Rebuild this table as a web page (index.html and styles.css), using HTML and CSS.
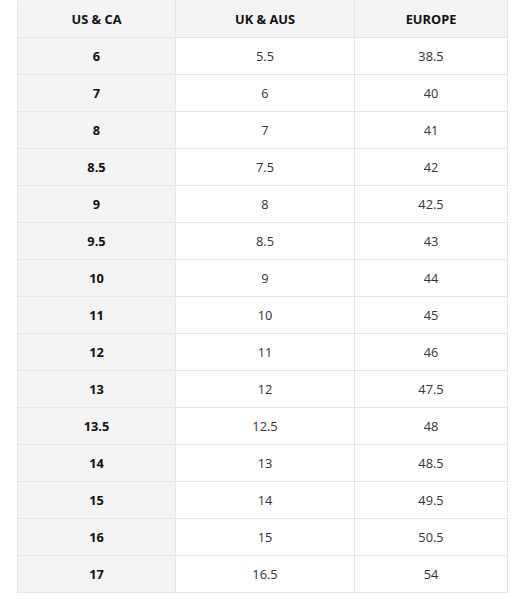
FILE: index.html
```html
<!DOCTYPE html>
<html>
<head>
<meta charset="utf-8">
<link rel="stylesheet" href="styles.css">
</head>
<body>
<div class="wrap">
<table class="sizes">
<colgroup><col class="c1"><col class="c2"><col class="c3"></colgroup>
<thead>
<tr><th>US &amp; CA</th><th>UK &amp; AUS</th><th>EUROPE</th></tr>
</thead>
<tbody>
<tr><th>6</th><td>5.5</td><td>38.5</td></tr>
<tr><th>7</th><td>6</td><td>40</td></tr>
<tr><th>8</th><td>7</td><td>41</td></tr>
<tr><th>8.5</th><td>7.5</td><td>42</td></tr>
<tr><th>9</th><td>8</td><td>42.5</td></tr>
<tr><th>9.5</th><td>8.5</td><td>43</td></tr>
<tr><th>10</th><td>9</td><td>44</td></tr>
<tr><th>11</th><td>10</td><td>45</td></tr>
<tr><th>12</th><td>11</td><td>46</td></tr>
<tr><th>13</th><td>12</td><td>47.5</td></tr>
<tr><th>13.5</th><td>12.5</td><td>48</td></tr>
<tr><th>14</th><td>13</td><td>48.5</td></tr>
<tr><th>15</th><td>14</td><td>49.5</td></tr>
<tr><th>16</th><td>15</td><td>50.5</td></tr>
<tr><th>17</th><td>16.5</td><td>54</td></tr>
</tbody>
</table>
</div>
</body>
</html>
```
FILE: styles.css
```css
html, body {
  margin: 0;
  padding: 0;
  background: #ffffff;
}
.wrap {
  padding-left: 17px;
}
.sizes {
  border-collapse: collapse;
  table-layout: fixed;
  width: 490px;
  font-family: "Open Sans", "DejaVu Sans", sans-serif;
  font-size: 12.8px;
  color: #333333;
}
.c1 { width: 158px; }
.c2 { width: 179px; }
.c3 { width: 153px; }
.sizes th, .sizes td {
  border: 1px solid #e6e6e6;
  height: 36px;
  padding: 0;
  text-align: center;
  vertical-align: middle;
}
.sizes thead th {
  background: #f4f4f4;
  font-weight: 700;
  color: #111111;
  border-top-color: #f4f4f4;
}
.sizes tbody th {
  background: #f4f4f4;
  font-weight: 700;
  color: #111111;
}
.sizes td {
  background: #ffffff;
}
```
